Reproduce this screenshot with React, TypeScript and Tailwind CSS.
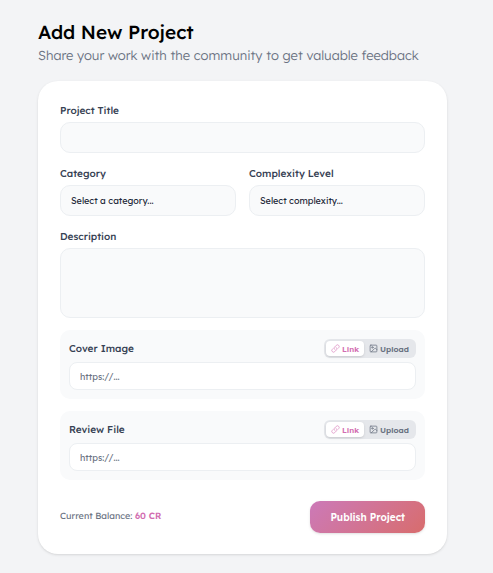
import { useState } from "react";
import type { ReactNode } from "react";
import { HiOutlineLink } from "react-icons/hi2";
import { LuImage } from "react-icons/lu";

type Source = "link" | "upload";

const fieldClass =
  "block w-full appearance-none rounded-[10px] border border-[#eceff2] bg-gray-50 px-2.5 text-[9px] text-gray-800 outline-none";

function Field({ id, label, children }: { id: string; label: string; children: ReactNode }) {
  return (
    <div>
      <label htmlFor={id} className="mb-0.5 block text-[10px] leading-[18px] font-medium text-gray-700">
        {label}
      </label>
      {children}
    </div>
  );
}

function SourcePanel({ id, label }: { id: string; label: string }) {
  const [source, setSource] = useState<Source>("link");
  const tab = (value: Source) =>
    source === value ? "bg-white text-[#d26db0] shadow-sm" : "text-gray-500";

  return (
    <div className="rounded-[10px] bg-gray-50 p-[9px]">
      <div className="mb-1 flex items-center justify-between">
        <label htmlFor={id} className="text-[10px] leading-[18px] font-medium text-gray-700">
          {label}
        </label>
        <div className="flex rounded-md bg-gray-200 p-0.5">
          <button
            type="button"
            onClick={() => setSource("link")}
            className={`flex h-[15px] items-center gap-0.5 rounded px-[5px] text-[8px] font-semibold ${tab("link")}`}
          >
            <HiOutlineLink className="size-[9px]" />
            Link
          </button>
          <button
            type="button"
            onClick={() => setSource("upload")}
            className={`flex h-[15px] items-center gap-0.5 rounded px-[5px] text-[8px] font-semibold ${tab("upload")}`}
          >
            <LuImage className="size-[9px]" />
            Upload
          </button>
        </div>
      </div>
      <input
        id={id}
        type={source === "link" ? "url" : "text"}
        placeholder="https://..."
        className="block h-7 w-full rounded-lg border border-[#eceff2] bg-white px-2.5 text-[9px] text-gray-800 outline-none placeholder:text-gray-500"
      />
    </div>
  );
}

export default function App() {
  return (
    <main className="min-h-screen bg-gray-100 pt-5 pr-[46px] pb-[19px] pl-[38px] font-['Lexend','Inter',sans-serif] [text-rendering:geometricPrecision]">
      <h1 className="text-[19px] leading-6 font-medium text-black">Add New Project</h1>
      <p className="mt-0.5 text-[13px] leading-5 font-light text-gray-500">
        Share your work with the community to get valuable feedback
      </p>

      <form
        onSubmit={(e) => e.preventDefault()}
        className="mt-[15px] flex flex-col gap-3 rounded-[20px] bg-white px-[22px] py-[21px] shadow-sm"
      >
        <Field id="title" label="Project Title">
          <input id="title" type="text" className={`${fieldClass} h-[31px]`} />
        </Field>

        <div className="grid grid-cols-2 gap-[13px]">
          <Field id="category" label="Category">
            <select id="category" className={`${fieldClass} h-[31px]`}>
              <option>Select a category...</option>
            </select>
          </Field>
          <Field id="complexity" label="Complexity Level">
            <select id="complexity" className={`${fieldClass} h-[31px]`}>
              <option>Select complexity...</option>
            </select>
          </Field>
        </div>

        <Field id="description" label="Description">
          <textarea id="description" className={`${fieldClass} h-[70px] resize-none py-2`} />
        </Field>

        <SourcePanel id="cover" label="Cover Image" />
        <SourcePanel id="review" label="Review File" />

        <div className="mt-[9px] flex items-center justify-between">
          <p className="text-[9px] leading-4 text-gray-500">
            Current Balance: <span className="font-semibold text-[#d26db0]">60 CR</span>
          </p>
          <button
            type="submit"
            className="h-8 rounded-[10px] bg-linear-135 from-[#cc79b8] to-[#d86c6c] px-5 text-[10px] font-semibold text-white shadow-sm"
          >
            Publish Project
          </button>
        </div>
      </form>
    </main>
  );
}
